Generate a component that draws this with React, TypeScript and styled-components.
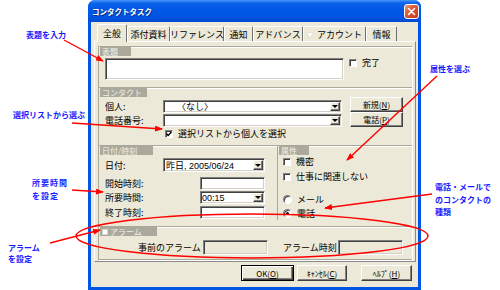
import React from "react";
import styled, { createGlobalStyle, css } from "styled-components";

const FONT = `"Liberation Sans", "Noto Sans CJK JP", sans-serif`;
const JP = `"Noto Sans CJK JP", sans-serif`;

const Global = createGlobalStyle`
  html, body { margin: 0; padding: 0; background: #fff; }
  body { font-family: ${FONT}; color: #000; }
  * { box-sizing: border-box; }
`;

const sunken = css`
  border: 1px solid;
  border-color: #808080 #ffffff #ffffff #808080;
  box-shadow: inset 1px 1px 0 #404040, inset -1px -1px 0 #d4d0c8;
`;

const raised = css`
  border: 1px solid;
  border-color: #ffffff #404040 #404040 #ffffff;
  box-shadow: inset -1px -1px 0 #808080;
`;

const Page = styled.div`
  position: relative;
  width: 500px;
  height: 290px;
  overflow: hidden;
  background: #fff;
`;

const Window = styled.div`
  margin-left: 88px;
  width: 333px;
  height: 290px;
  display: flex;
  flex-direction: column;
  background: #0055e5;
  border-radius: 7px 7px 0 0;
  padding: 0 3px 3px;
`;

const TitleBar = styled.div`
  height: 22px;
  margin: 0 -3px;
  padding: 0 2px 0 4px;
  display: flex;
  align-items: center;
  justify-content: space-between;
  border-radius: 7px 7px 0 0;
  background: linear-gradient(180deg, #4a95f8 0%, #0c64ec 14%, #0058e6 40%, #0054e3 75%, #004bd2 100%);
`;

const Title = styled.span`
  color: #fff;
  font-family: ${JP};
  font-weight: 700;
  font-size: 7.5px;
  text-shadow: 1px 1px 0 #0a2a8a;
`;

const CloseBtn = styled.div`
  width: 15px;
  height: 15px;
  border: 1px solid #fff;
  border-radius: 3px;
  background: linear-gradient(135deg, #eb9a80 0%, #dc5a36 40%, #c53c1a 100%);
  display: flex;
  align-items: center;
  justify-content: center;
`;

const Body = styled.div`
  flex: 1;
  background: #ece9d8;
  display: flex;
  flex-direction: column;
`;

const TabStrip = styled.div`
  display: flex;
  align-items: flex-end;
  height: 17px;
  margin: 2px 0 0 6px;
  position: relative;
  z-index: 1;
`;

const Tab = styled.div<{ $w: number; $active?: boolean }>`
  width: ${(p) => p.$w}px;
  height: ${(p) => (p.$active ? 18 : 15)}px;
  margin-bottom: ${(p) => (p.$active ? -1 : 0)}px;
  border-left: 1px solid #fff;
  border-top: 1px solid #fff;
  border-right: 1px solid #6f6f6f;
  border-radius: 2px 2px 0 0;
  background: #ece9d8;
  display: flex;
  align-items: center;
  justify-content: center;
  gap: 4px;
  padding-bottom: ${(p) => (p.$active ? 1 : 0)}px;
  font-family: ${JP};
  font-size: 9px;
  white-space: nowrap;
`;

const TabArrow = styled.span`
  color: #fff;
  font-size: 6px;
  text-shadow: 0 0 1px #999;
`;

const Panel = styled.div`
  margin-left: 3px;
  width: 322px;
  height: 221px;
  border: 1px solid;
  border-color: #fff #8a8a8a #8a8a8a #fff;
  padding: 4px 3px 1px;
  display: flex;
`;

const Frame = styled.div`
  flex: 1;
  display: flex;
  flex-direction: column;
  border-left: 1px solid #aca899;
  border-bottom: 1px solid #aca899;
  box-shadow: 1px 1px 0 #fff;
`;

const Head = styled.div`
  height: 10px;
  border-top: 1px solid #aca899;
  box-shadow: inset 0 1px 0 #fff;
  display: flex;
  align-items: flex-start;
`;

const Tag = styled.div<{ $w: number }>`
  margin-left: 1px;
  width: ${(p) => p.$w}px;
  height: 9px;
  background: #aba99c;
  color: #f2f1ea;
  font-family: ${JP};
  font-size: 8px;
  line-height: 9px;
  padding-left: 2px;
  display: flex;
  align-items: center;
  gap: 2px;
  white-space: nowrap;
`;

const TagBox = styled.span`
  width: 6px;
  height: 6px;
  background: #fff;
  border: 1px solid #d8d6cc;
`;

const Section = styled.div<{ $mt: number }>`
  margin-top: ${(p) => p.$mt}px;
  display: flex;
  flex-direction: column;
`;

const SubjectRow = styled.div`
  margin-top: 2px;
  padding-left: 6px;
  display: flex;
  align-items: flex-start;
  gap: 5px;
`;

const TextArea = styled.div`
  ${sunken}
  width: 239px;
  height: 22px;
  background: #fff;
`;

const Check = styled.label<{ $mt?: number; $h?: number }>`
  margin-top: ${(p) => p.$mt ?? 0}px;
  height: ${(p) => p.$h ?? 13}px;
  display: flex;
  align-items: center;
  gap: 5px;
  font-family: ${JP};
  font-size: 9px;
  white-space: nowrap;
`;

const Box = styled.span`
  width: 8px;
  height: 8px;
  flex: none;
  background: #fff;
  border: 1px solid;
  border-color: #808080 #fff #fff #808080;
  box-shadow: inset 1px 1px 0 #404040;
  display: flex;
  align-items: center;
  justify-content: center;
`;

const Radio = styled.span<{ $on?: boolean }>`
  width: 9px;
  height: 9px;
  flex: none;
  border-radius: 50%;
  background: #fff;
  border: 1px solid;
  border-color: #808080 #fff #fff #808080;
  box-shadow: inset 1px 1px 0 #404040;
  display: flex;
  align-items: center;
  justify-content: center;
  &::after {
    content: "";
    width: 3px;
    height: 3px;
    border-radius: 50%;
    background: ${(p) => (p.$on ? "#000" : "transparent")};
  }
`;

const ContactBody = styled.div`
  display: flex;
  align-items: flex-start;
`;

const ContactLeft = styled.div`
  width: 244px;
  flex: none;
  padding: 3px 0 0 6px;
  display: flex;
  flex-direction: column;
`;

const ContactRight = styled.div`
  margin-left: 7px;
  display: flex;
  flex-direction: column;
`;

const Row = styled.div<{ $mt?: number; $h?: number; $pl?: number }>`
  margin-top: ${(p) => p.$mt ?? 0}px;
  height: ${(p) => p.$h ?? 13}px;
  padding-left: ${(p) => p.$pl ?? 0}px;
  display: flex;
  align-items: center;
`;

const Label = styled.span<{ $w: number; $ls?: number }>`
  width: ${(p) => p.$w}px;
  flex: none;
  font-family: ${JP};
  font-size: 9px;
  letter-spacing: ${(p) => p.$ls ?? 0}px;
  white-space: nowrap;
`;

const Field = styled.div<{ $w: number; $h: number; $off?: boolean }>`
  ${sunken}
  width: ${(p) => p.$w}px;
  height: ${(p) => p.$h}px;
  flex: none;
  background: ${(p) => (p.$off ? "#ece9d8" : "#fff")};
  display: flex;
  align-items: center;
  padding: 1px;
  font-size: 9px;
`;

const FieldText = styled.span<{ $indent?: number }>`
  flex: 1;
  padding-left: ${(p) => p.$indent ?? 1}px;
  white-space: nowrap;
  overflow: hidden;
  font-family: ${FONT};
`;

const DropBtn = styled.span`
  ${raised}
  width: 10px;
  height: 100%;
  flex: none;
  background: #ece9d8;
  display: flex;
  align-items: center;
  justify-content: center;
  &::after {
    content: "";
    border-left: 3px solid transparent;
    border-right: 3px solid transparent;
    border-top: 3px solid #000;
  }
`;

const Button = styled.div<{ $w: number; $h: number; $default?: boolean }>`
  width: ${(p) => p.$w}px;
  height: ${(p) => p.$h}px;
  flex: none;
  background: #ece9d8;
  border: 1px solid;
  border-color: ${(p) => (p.$default ? "#000" : "#fff #404040 #404040 #fff")};
  box-shadow: ${(p) =>
    p.$default
      ? "inset 1px 1px 0 #fff, inset -1px -1px 0 #404040, inset -2px -2px 0 #808080"
      : "inset -1px -1px 0 #808080"};
  display: flex;
  align-items: center;
  justify-content: center;
  font-family: ${JP};
  font-size: 8px;
  white-space: nowrap;
  u {
    text-decoration: underline;
  }
`;

const DateTime = styled.div`
  display: flex;
  align-items: flex-start;
`;

const DateCol = styled.div`
  width: 178px;
  flex: none;
  display: flex;
  flex-direction: column;
`;

const AttrCol = styled.div`
  flex: 1;
  align-self: stretch;
  border-left: 1px solid #aca899;
  display: flex;
  flex-direction: column;
`;

const AttrList = styled.div`
  padding-left: 5px;
  display: flex;
  flex-direction: column;
`;

const ButtonBar = styled.div`
  margin-top: 3px;
  padding-right: 6px;
  display: flex;
  justify-content: flex-end;
  gap: 3px;
`;

const Spacer = styled.span<{ $w: number }>`
  width: ${(p) => p.$w}px;
  flex: none;
`;

const Note = styled.div<{ $x: number; $y: number; $lh?: number; $ls?: number }>`
  position: absolute;
  left: ${(p) => p.$x}px;
  top: ${(p) => p.$y}px;
  color: #1a1aff;
  font-family: ${JP};
  font-weight: 700;
  font-size: 8px;
  line-height: ${(p) => p.$lh ?? 12}px;
  letter-spacing: ${(p) => p.$ls ?? 0}px;
  white-space: nowrap;
`;

const Overlay = styled.svg`
  position: absolute;
  left: 0;
  top: 0;
  pointer-events: none;
`;

const CheckMark = () => (
  <svg width="6" height="6" viewBox="0 0 6 6">
    <path d="M0.6 2.8 L2.2 4.5 L5.4 1" stroke="#000" strokeWidth="1.4" fill="none" />
  </svg>
);

const arrows: [number, number, number, number][] = [
  [64, 40, 103, 61],
  [72, 123, 162, 129],
  [72, 190, 103, 192],
  [50, 243, 100, 230],
  [437, 76, 347, 160],
  [432, 194, 325, 208],
];

export default function App() {
  return (
    <Page>
      <Global />
      <Window>
        <TitleBar>
          <Title>コンタクトタスク</Title>
          <CloseBtn>
            <svg width="9" height="9" viewBox="0 0 9 9">
              <path d="M1.5 1.5 L7.5 7.5 M7.5 1.5 L1.5 7.5" stroke="#fff" strokeWidth="1.6" strokeLinecap="round" />
            </svg>
          </CloseBtn>
        </TitleBar>
        <Body>
          <TabStrip>
            <Tab $w={30} $active>全般</Tab>
            <Tab $w={43}>添付資料</Tab>
            <Tab $w={54}>リファレンス</Tab>
            <Tab $w={29}>通知</Tab>
            <Tab $w={50}>アドバンス</Tab>
            <Tab $w={63}>
              <TabArrow>▼</TabArrow>アカウント
            </Tab>
            <Tab $w={31}>情報</Tab>
          </TabStrip>
          <Panel>
            <Frame>
              <Section $mt={0}>
                <Head>
                  <Tag $w={31}>表題</Tag>
                </Head>
                <SubjectRow>
                  <TextArea />
                  <Check $h={9}>
                    <Box />
                    完了
                  </Check>
                </SubjectRow>
              </Section>

              <Section $mt={7}>
                <Head>
                  <Tag $w={47}>コンタクト</Tag>
                </Head>
                <ContactBody>
                  <ContactLeft>
                    <Row>
                      <Label $w={58}>個人:</Label>
                      <Field $w={179} $h={13}>
                        <FieldText $indent={12}>〈なし〉</FieldText>
                        <DropBtn />
                      </Field>
                    </Row>
                    <Row $mt={1}>
                      <Label $w={58}>電話番号:</Label>
                      <Field $w={179} $h={13}>
                        <FieldText />
                        <DropBtn />
                      </Field>
                    </Row>
                    <Row $mt={2} $h={9} $pl={60}>
                      <Check $h={9}>
                        <Box>
                          <CheckMark />
                        </Box>
                        選択リストから個人を選択
                      </Check>
                    </Row>
                  </ContactLeft>
                  <ContactRight>
                    <Button $w={53} $h={15}>
                      新規(<u>N</u>)
                    </Button>
                    <Button $w={53} $h={15}>
                      電話(<u>P</u>)
                    </Button>
                  </ContactRight>
                </ContactBody>
              </Section>

              <Section $mt={7}>
                <DateTime>
                  <DateCol>
                    <Head>
                      <Tag $w={53}>日付/時刻</Tag>
                    </Head>
                    <Row $mt={3} $h={14} $pl={6}>
                      <Label $w={58}>日付:</Label>
                      <Field $w={102} $h={14}>
                        <FieldText>昨日, 2005/06/24</FieldText>
                        <DropBtn />
                      </Field>
                    </Row>
                    <Row $mt={5} $pl={6}>
                      <Label $w={95}>開始時刻:</Label>
                      <Field $w={65} $h={13} />
                    </Row>
                    <Row $mt={1} $pl={6}>
                      <Label $w={95}>所要時間:</Label>
                      <Field $w={65} $h={13}>
                        <FieldText $indent={0}>00:15</FieldText>
                        <DropBtn />
                      </Field>
                    </Row>
                    <Row $mt={2} $pl={6}>
                      <Label $w={95}>終了時刻:</Label>
                      <Field $w={65} $h={13} />
                    </Row>
                  </DateCol>
                  <AttrCol>
                    <Head>
                      <Tag $w={30}>属性</Tag>
                    </Head>
                    <AttrList>
                      <Check>
                        <Box />
                        機密
                      </Check>
                      <Check $mt={2}>
                        <Box />
                        仕事に関連しない
                      </Check>
                      <Check $mt={10}>
                        <Radio />
                        メール
                      </Check>
                      <Check $mt={1}>
                        <Radio $on />
                        電話
                      </Check>
                    </AttrList>
                  </AttrCol>
                </DateTime>
              </Section>

              <Section $mt={6}>
                <Head>
                  <Tag $w={57}>
                    <TagBox />
                    アラーム
                  </Tag>
                </Head>
                <Row $mt={4} $h={15} $pl={39}>
                  <Label $w={60}>事前のアラーム</Label>
                  <Spacer $w={5} />
                  <Field $w={65} $h={15} $off />
                  <Spacer $w={15} />
                  <Label $w={55}>アラーム時刻</Label>
                  <Field $w={65} $h={15} $off />
                </Row>
              </Section>
            </Frame>
          </Panel>
          <ButtonBar>
            <Button $w={53} $h={16} $default>
              OK(<u>O</u>)
            </Button>
            <Button $w={50} $h={16}>
              ｷｬﾝｾﾙ(<u>C</u>)
            </Button>
            <Spacer $w={8} />
            <Button $w={51} $h={16}>
              ﾍﾙﾌﾟ(<u>H</u>)
            </Button>
          </ButtonBar>
        </Body>
      </Window>

      <Note $x={26} $y={29}>表題を入力</Note>
      <Note $x={430} $y={63}>属性を選ぶ</Note>
      <Note $x={13} $y={109}>選択リストから選ぶ</Note>
      <Note $x={32} $y={176} $lh={13} $ls={1}>
        所要時間
        <br />
        を設定
      </Note>
      <Note $x={435} $y={181} $lh={12.5}>
        電話・メールで
        <br />
        のコンタクトの
        <br />
        種類
      </Note>
      <Note $x={8} $y={242} $lh={11}>
        アラーム
        <br />
        を設定
      </Note>

      <Overlay width={500} height={290} viewBox="0 0 500 290">
        <defs>
          <marker id="ah" markerWidth="8" markerHeight="6" refX="7" refY="3" orient="auto" markerUnits="userSpaceOnUse">
            <path d="M0,0 L8,3 L0,6 Z" fill="#ff0000" />
          </marker>
        </defs>
        <ellipse cx={252} cy={236} rx={176} ry={22} fill="none" stroke="#ff0000" strokeWidth={1.4} />
        {arrows.map(([x1, y1, x2, y2], i) => (
          <line key={i} x1={x1} y1={y1} x2={x2} y2={y2} stroke="#ff0000" strokeWidth={1.4} markerEnd="url(#ah)" />
        ))}
      </Overlay>
    </Page>
  );
}
